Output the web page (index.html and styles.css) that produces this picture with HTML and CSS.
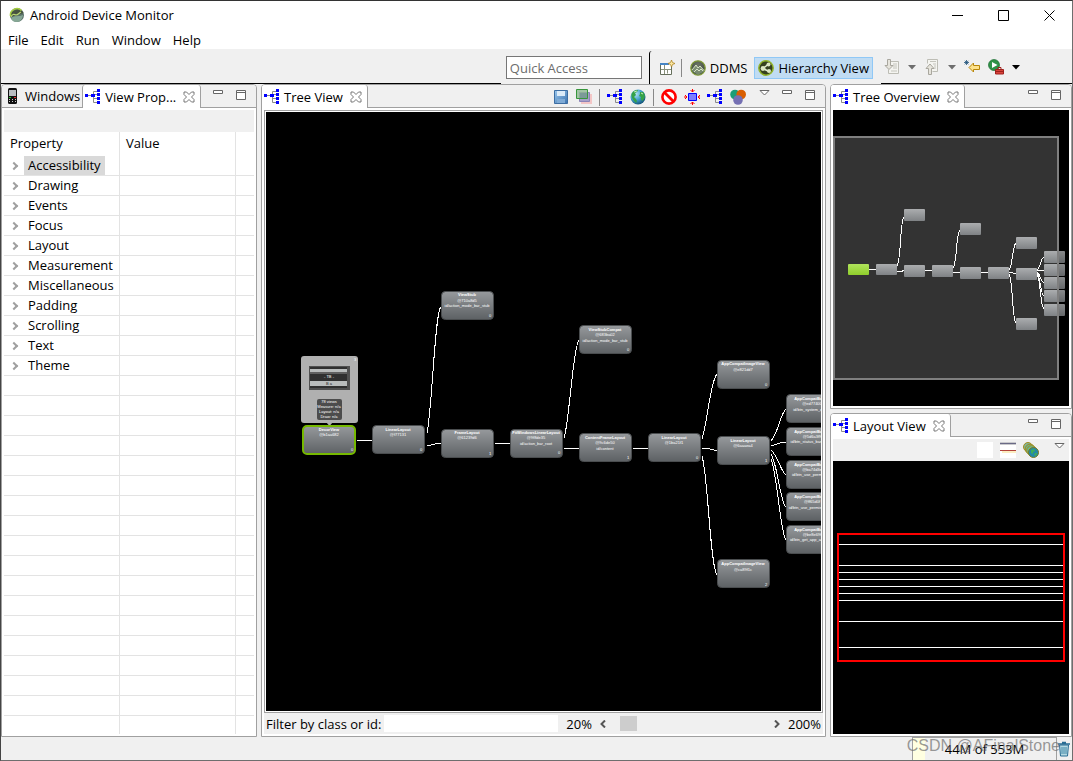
FILE: index.html
```html
<!DOCTYPE html>
<html lang="en">
<head>
<meta charset="utf-8">
<title>Android Device Monitor</title>
<link rel="stylesheet" href="styles.css">
</head>
<body>
<svg class="defs" aria-hidden="true">
  <defs>
    <linearGradient id="node-fill" x1="0" y1="0" x2="0" y2="1"><stop offset="0" stop-color="#96999c"/><stop offset="1" stop-color="#5d6164"/></linearGradient>
    <linearGradient id="mini-fill" x1="0" y1="0" x2="0" y2="1"><stop offset="0" stop-color="#abadaf"/><stop offset="1" stop-color="#7f8285"/></linearGradient>
    <linearGradient id="green-fill" x1="0" y1="0" x2="0" y2="1"><stop offset="0" stop-color="#b0e35c"/><stop offset="1" stop-color="#8fce2b"/></linearGradient>
    <linearGradient id="save-fill" x1="0" y1="0" x2="1" y2="1"><stop offset="0" stop-color="#9cc8ee"/><stop offset="1" stop-color="#3a72ae"/></linearGradient>
    <radialGradient id="globe-fill" cx=".35" cy=".3" r=".8"><stop offset="0" stop-color="#b8e6f6"/><stop offset=".5" stop-color="#3f9fcc"/><stop offset="1" stop-color="#0c4668"/></radialGradient>
    <radialGradient id="badge-fill" cx=".5" cy=".3" r=".7"><stop offset="0" stop-color="#6d7568"/><stop offset="1" stop-color="#39453a"/></radialGradient>
  </defs>
  <symbol id="i-tree" viewBox="0 0 16 16">
    <path d="M3 6.500h3M9 5.500h3M9 9.500h3M8.500 6v-3.500h4M8.500 8v5.500h4" fill="none" stroke="#8c8c8c"/>
    <path d="M0 5h3v3H0zM6 5h3v3H6zM9 5h1v3h-1zM12 0h3v3h-3zM12 4h3v3h-3zM12 8h3v3h-3zM12 12h3v3h-3z" fill="#00f"/>
  </symbol>
  <symbol id="i-close" viewBox="0 0 12 12">
    <path d="M1 1h2.500L6 3.500 8.500 1H11v2.500L8.500 6 11 8.500V11H8.500L6 8.500 3.500 11H1V8.500L3.500 6 1 3.500z" fill="#fff" stroke="#777"/>
  </symbol>
  <symbol id="i-min" viewBox="0 0 11 12"><path d="M.5 1.500h9v3h-9z" fill="#fff" stroke="#666"/></symbol>
  <symbol id="i-max" viewBox="0 0 11 12"><path d="M.5 1.500h9v9h-9zM.5 3.500h9" fill="#fff" stroke="#666"/></symbol>
  <symbol id="i-menu" viewBox="0 0 11 12"><path d="M1 1.500h9L5.500 6z" fill="#fff" stroke="#666"/></symbol>
  <symbol id="i-drop" viewBox="0 0 8 5"><path d="M0 0h8L4 4.500z" fill="currentColor"/></symbol>
  <symbol id="i-globe" viewBox="0 0 16 16">
    <circle cx="8" cy="8" r="7.500" fill="url(#globe-fill)"/>
    <path d="M2 4c2-3 4-3 6-3l-1 2-2 1 1 2-2 2 2 2 1 2-1 2-2-2-2-3c-.5-2-1-3 0-5zM10 3h3c2 2 2 4 1.500 6l-2 3-2-2 .5-2-2-1 1-2z" fill="#35a248"/>
    <path d="M4 3l3-1M11 4l2 1" stroke="#c9edb8"/>
  </symbol>
  <symbol id="i-logo" viewBox="0 0 16 16">
    <circle cx="8" cy="8" r="7" fill="#5a7168"/>
    <path d="M1.500 10A7 7 0 0 1 14.500 6z" fill="#47533f"/>
    <path d="M1.500 9a6.500 6.500 0 0 1 11-5.500" fill="none" stroke="#a6cf3e" stroke-width="1.500"/>
    <path d="M2 10c1-3 3-3 5-2 2 0 3-2 5-3" fill="none" stroke="#b9d873" stroke-width="1.200"/>
    <path d="M2 11c4-3 8-1 12-3-.5 4-3 7-6 7s-5-1-6-4z" fill="#86a795"/>
  </symbol>
  <symbol id="i-ddms" viewBox="0 0 16 16">
    <circle cx="8" cy="8" r="7.200" fill="url(#badge-fill)" stroke="#7f9a35" stroke-width="1.300"/>
    <path d="M2 10l4-5 2 2.500 2-1.500 4 4.500v1L8 15l-5.500-3.500z" fill="#8ba182" fill-opacity=".7"/>
    <path d="M2 10l4-5 2 3 2-2 4 4.500M4 12l3-3 2 2 2-2 2 2" fill="none" stroke="#d7e3c3"/>
  </symbol>
  <symbol id="i-hier" viewBox="0 0 16 16">
    <circle cx="8" cy="8" r="7.200" fill="#35411f" stroke="#93b52c" stroke-width="1.500"/>
    <path d="M5 8.500l5-4M5 8.500l6 3" stroke="#e5edd2" stroke-width="1.500"/>
    <circle cx="5" cy="8.500" r="2.400" fill="#dbe6c0"/><circle cx="10.500" cy="4.500" r="2" fill="#dbe6c0"/><circle cx="11" cy="11" r="2" fill="#dbe6c0"/>
  </symbol>
</svg>

<div class="window">
  <header class="titlebar">
    <svg class="icon" viewBox="0 0 16 16"><use href="#i-logo"/></svg>
    <h1 class="title">Android Device Monitor</h1>
    <div class="controls">
      <button class="control" aria-label="Minimize"><svg class="glyph" viewBox="0 0 11 11"><path d="M0 5.500h11" stroke="#000"/></svg></button>
      <button class="control" aria-label="Maximize"><svg class="glyph" viewBox="0 0 11 11"><path d="M.5.5h10v10H.5z" fill="none" stroke="#000"/></svg></button>
      <button class="control" aria-label="Close"><svg class="glyph" viewBox="0 0 11 11"><path d="M.5.5l10 10M10.500.5l-10 10" stroke="#000"/></svg></button>
    </div>
  </header>
  <nav class="menubar">
    <button class="menu">File</button><button class="menu">Edit</button><button class="menu">Run</button><button class="menu">Window</button><button class="menu">Help</button>
  </nav>

  <div class="toolbar">
    <div class="trim trim-lead"></div>
    <div class="search"><input class="quick" type="text" placeholder="Quick Access" aria-label="Quick Access"></div>
    <div class="perspectives">
      <button class="tool" aria-label="Open Perspective"><svg class="icon" viewBox="0 0 16 16"><path d="M1.500 3.500h11v11h-11z" fill="#fff" stroke="#66705c"/><path d="M1 3h9v2H1z" fill="#4684c4"/><path d="M5.500 5v9M2 9.500h10M8.500 9.500v4" stroke="#8a927c"/><path d="M12.500 0l1 2.500 2.500 1-2.500 1-1 2.500-1-2.500-2.500-1 2.500-1z" fill="#fbe7a0" stroke="#a87b16" stroke-width=".7"/></svg></button>
      <span class="sep"></span>
      <button class="persp"><svg class="icon" viewBox="0 0 16 16"><use href="#i-ddms"/></svg>DDMS</button>
      <button class="persp selected"><svg class="icon" viewBox="0 0 16 16"><use href="#i-hier"/></svg>Hierarchy View</button>
    </div>
    <div class="trim actions">
      <button class="tool" aria-label="Next Annotation"><svg class="icon" viewBox="0 0 16 16"><path d="M6.500 2.500h8v12h-10v-4" fill="#f4f4f0" stroke="#bdbdb5"/><path d="M9 5h4M9 7h4M9 9h4M7 12h6" stroke="#c4c4bc"/><path d="M3.500.5h3v6h2.500L5 10.500 1 6.500h2.500z" fill="#e6e4dc" stroke="#a9a79e"/></svg></button>
      <button class="tool dim" aria-label="Next Annotation menu"><svg class="drop" viewBox="0 0 8 5"><use href="#i-drop"/></svg></button>
      <button class="tool" aria-label="Previous Annotation"><svg class="icon" viewBox="0 0 16 16"><path d="M3.500 4.500v-4h10v12h-5" fill="#f4f4f0" stroke="#bdbdb5"/><path d="M6 2.500h6M9 5h3M10 7h2M10 9h2" stroke="#c4c4bc"/><path d="M4.500 15.500v-6H2L6 5l4 4.500H7.500v6z" fill="#e6e4dc" stroke="#a9a79e"/></svg></button>
      <button class="tool dim" aria-label="Previous Annotation menu"><svg class="drop" viewBox="0 0 8 5"><use href="#i-drop"/></svg></button>
      <button class="tool" aria-label="Last Edit Location"><svg class="icon" viewBox="0 0 16 16"><path d="M5 8.500L9.500 4v2.500h6v4h-6V13z" fill="#fde28c" stroke="#b8860b"/><path d="M2.500 1v5M0 3.500h5M.8 1.800l3.500 3.500M4.300 1.800L.8 5.300" stroke="#1e5078" stroke-width=".8"/></svg></button>
      <button class="tool" aria-label="Run External Tools"><svg class="icon" viewBox="0 0 16 16"><circle cx="6" cy="6" r="5.500" fill="#2f9246" stroke="#1c6e34" stroke-width=".7"/><path d="M4 3l5.500 3L4 9z" fill="#fff"/><path d="M7.500 10.500h8v4.500h-8z" fill="#d8433b" stroke="#9e211c"/><path d="M10 10V8.500h3V10M7.500 12.500h8" fill="none" stroke="#9e211c"/></svg></button>
      <button class="tool" aria-label="External Tools menu"><svg class="drop" viewBox="0 0 8 5"><use href="#i-drop"/></svg></button>
    </div>
  </div>

  <main class="workbench">
    <section class="panel">
      <div class="tabs">
        <button class="tab"><svg class="icon" viewBox="0 0 16 16"><rect x="3" y="0" width="9" height="16" rx="1.500" fill="#111"/><path d="M4 2h7v6H4z" fill="#b8bcc0"/><path d="M4 9.500h2" stroke="#2c2"/><path d="M9 9.500h2" stroke="#e22"/><path d="M4 11.500h7M4 13.500h7" stroke="#ccc" stroke-dasharray="1 2"/></svg>Windows</button>
        <div class="tab active"><svg class="icon" viewBox="0 0 16 16"><use href="#i-tree"/></svg>View Prop...<button class="tool close" aria-label="Close"><svg class="x" viewBox="0 0 12 12"><use href="#i-close"/></svg></button></div>
        <div class="tab-tools">
          <button class="tool mini" aria-label="Minimize"><svg class="box" viewBox="0 0 11 12"><use href="#i-min"/></svg></button>
          <button class="tool mini" aria-label="Maximize"><svg class="box" viewBox="0 0 11 12"><use href="#i-max"/></svg></button>
        </div>
      </div>
      <div class="content">
        <div class="viewbar"></div>
        <div class="grid">
          <table class="props">
            <thead><tr><th>Property</th><th>Value</th><th></th></tr></thead>
            <tbody>
              <tr><td><span class="twist"></span><span class="name picked">Accessibility</span></td><td></td><td></td></tr>
              <tr><td><span class="twist"></span><span class="name">Drawing</span></td><td></td><td></td></tr>
              <tr><td><span class="twist"></span><span class="name">Events</span></td><td></td><td></td></tr>
              <tr><td><span class="twist"></span><span class="name">Focus</span></td><td></td><td></td></tr>
              <tr><td><span class="twist"></span><span class="name">Layout</span></td><td></td><td></td></tr>
              <tr><td><span class="twist"></span><span class="name">Measurement</span></td><td></td><td></td></tr>
              <tr><td><span class="twist"></span><span class="name">Miscellaneous</span></td><td></td><td></td></tr>
              <tr><td><span class="twist"></span><span class="name">Padding</span></td><td></td><td></td></tr>
              <tr><td><span class="twist"></span><span class="name">Scrolling</span></td><td></td><td></td></tr>
              <tr><td><span class="twist"></span><span class="name">Text</span></td><td></td><td></td></tr>
              <tr><td><span class="twist"></span><span class="name">Theme</span></td><td></td><td></td></tr>
            </tbody>
          </table>
        </div>
      </div>
    </section>

    <section class="panel">
      <div class="tabs">
        <div class="tab active"><svg class="icon" viewBox="0 0 16 16"><use href="#i-tree"/></svg>Tree View<button class="tool close" aria-label="Close"><svg class="x" viewBox="0 0 12 12"><use href="#i-close"/></svg></button></div>
        <div class="tab-tools">
          <div class="view-actions">
            <button class="tool" aria-label="Save as PNG"><svg class="icon" viewBox="0 0 16 16"><path d="M1.500 1.500h13v13h-13z" fill="url(#save-fill)" stroke="#3d6ea3"/><path d="M4 2h8v5H4z" fill="#dcebf8"/><path d="M4 10h8v4H4z" fill="#7fabd6"/></svg></button>
            <button class="tool" aria-label="Capture Layers"><svg class="icon" viewBox="0 0 16 16"><path d="M5 5h11v10H5z" fill="#f3c6c6"/><path d="M3.500 3.500h10v9h-10z" fill="#a7a0c8" stroke="#8c84b8"/><path d="M.5.5h11v9H.5z" fill="#8fb992" fill-opacity=".8" stroke="#37963b"/><path d="M4 4h7v5H4z" fill="#7b9a98"/></svg></button>
            <span class="sep"></span>
            <button class="tool" aria-label="Load View Hierarchy"><svg class="icon" viewBox="0 0 16 16"><use href="#i-tree"/></svg></button>
            <button class="tool" aria-label="Display View"><svg class="icon" viewBox="0 0 16 16"><use href="#i-globe"/></svg></button>
            <span class="sep"></span>
            <button class="tool" aria-label="Invalidate Layout"><svg class="icon" viewBox="0 0 16 16"><circle cx="8" cy="8" r="6.600" fill="#fff" stroke="#f00" stroke-width="2.600"/><path d="M3.500 3.500l9 9" stroke="#f00" stroke-width="2.800"/></svg></button>
            <button class="tool" aria-label="Request Layout"><svg class="icon" viewBox="0 0 16 16"><path d="M4.500 4.500h8v7h-8z" fill="#7d7dff" stroke="#00f"/><path d="M8.500 0v3M6.500 1l2 2 2-2M8.500 16v-3M6.500 15l2-2 2 2M0 8h3M1 6l2 2-2 2M16 8h-2M16 6l-2 2 2 2" fill="none" stroke="#f00"/></svg></button>
            <button class="tool" aria-label="Dump Display List"><svg class="icon" viewBox="0 0 16 16"><use href="#i-tree"/></svg></button>
            <button class="tool" aria-label="Profile Node"><svg class="icon" viewBox="0 0 16 16"><circle cx="5" cy="5.500" r="4.800" fill="#1b9e77"/><circle cx="11.200" cy="5.500" r="4.800" fill="#d95f02"/><circle cx="8" cy="11" r="4.800" fill="#7570b3"/></svg></button>
          </div>
          <button class="tool mini" aria-label="View Menu"><svg class="box" viewBox="0 0 11 12"><use href="#i-menu"/></svg></button>
          <button class="tool mini" aria-label="Minimize"><svg class="box" viewBox="0 0 11 12"><use href="#i-min"/></svg></button>
          <button class="tool mini" aria-label="Maximize"><svg class="box" viewBox="0 0 11 12"><use href="#i-max"/></svg></button>
        </div>
      </div>
      <div class="content">
        <div class="frame">
          <svg class="canvas" role="img" aria-label="View hierarchy">
            <g transform="translate(-266 -112)">
              <g class="edges">
                <path d="M357 440.500h15M427 433C432 410 435 310 441 307M427 446l8-2 6-1M495 443.500h15M564 438C569 425 573 346 579 340M564 449l8-1h7M633 448.500h15M702 439C708 420 710 382 717 374M702 448h5l10 3M702 456C708 475 710 565 717 575M771 441C778 434 780 414 786 409M771 446l9-3 6-1M771 450C778 456 780 470 786 475M771 454C778 466 780 502 786 507M771 459C778 478 780 532 786 540"/>
              </g>
              <rect x="301" y="356" width="57" height="67" rx="3" fill="#b0b0b0"/>
              <path d="M326 422h7l-3.500 4z" fill="#b0b0b0"/>
              <path d="M309 366h41v24h-41z" fill="#505050"/>
              <path d="M310 367h37v21h-37z" fill="#303030"/>
              <path d="M310 369h37v3h-37zM310 381h37v5h-37z" fill="#b9bcbc"/>
              <path d="M310 372h37v2h-37z" fill="#606060"/>
              <rect x="317" y="399" width="25" height="21" rx="2" fill="#4c4c4c"/>
              <g class="label">
                <text x="355" y="361">3</text><text x="329" y="378">- TB -</text><text class="dark" x="329" y="385">B a</text>
                <text x="329" y="403">78 views</text><text x="329" y="408">Measure: n/a</text><text x="329" y="413">Layout: n/a</text><text x="329" y="418">Draw: n/a</text>
              </g>
              <g class="nodes">
                <rect class="root" x="303" y="426" width="52" height="28" rx="4"/>
                <rect x="372.500" y="425.500" width="52" height="28" rx="4"/>
                <rect x="441.500" y="291.500" width="52" height="28" rx="4"/>
                <rect x="441.500" y="429.500" width="52" height="28" rx="4"/>
                <rect x="510.500" y="429.500" width="52" height="28" rx="4"/>
                <rect x="579.500" y="325.500" width="52" height="28" rx="4"/>
                <rect x="579.500" y="433.500" width="52" height="28" rx="4"/>
                <rect x="648.500" y="433.500" width="52" height="28" rx="4"/>
                <rect x="717.500" y="360.500" width="52" height="28" rx="4"/>
                <rect x="717.500" y="436.500" width="52" height="28" rx="4"/>
                <rect x="717.500" y="559.500" width="52" height="28" rx="4"/>
                <rect x="786.500" y="394.500" width="52" height="28" rx="4"/>
                <rect x="786.500" y="427.500" width="52" height="28" rx="4"/>
                <rect x="786.500" y="460.500" width="52" height="28" rx="4"/>
                <rect x="786.500" y="492.500" width="52" height="28" rx="4"/>
                <rect x="786.500" y="525.500" width="52" height="28" rx="4"/>
              </g>
              <g class="label strong">
                <text x="329" y="431">DecorView</text><text x="398" y="431">LinearLayout</text><text x="467" y="296">ViewStub</text><text x="467" y="434">FrameLayout</text>
                <text x="536" y="434">FitWindowsLinearLayout</text><text x="605" y="331">ViewStubCompat</text><text x="605" y="439">ContentFrameLayout</text><text x="674" y="439">LinearLayout</text>
                <text x="743" y="365">AppCompatImageView</text><text x="743" y="442">LinearLayout</text><text x="743" y="565">AppCompatImageView</text>
                <text x="812" y="400">AppCompatButton</text><text x="812" y="433">AppCompatButton</text><text x="812" y="466">AppCompatButton</text><text x="812" y="498">AppCompatButton</text><text x="812" y="531">AppCompatButton</text>
              </g>
              <g class="label">
                <text x="329" y="436">@b1aa682</text><text x="398" y="436">@f77131</text>
                <text x="467" y="302">@710a8d5</text><text x="467" y="307">id/action_mode_bar_stub</text>
                <text x="467" y="439">@61239d6</text>
                <text x="536" y="439">@9f8de35</text><text x="536" y="445">id/action_bar_root</text>
                <text x="605" y="336">@683ba02</text><text x="605" y="342">id/action_mode_bar_stub</text>
                <text x="605" y="444">@9c6de50</text><text x="605" y="450">id/content</text>
                <text x="674" y="444">@1ba21f1</text><text x="743" y="371">@e821dd7</text><text x="743" y="447">@6aaaea4</text><text x="743" y="571">@ca89f1c</text>
                <text x="812" y="405">@ed77400</text><text x="812" y="411">id/btn_system_dialog</text>
                <text x="812" y="438">@5d6a3f9</text><text x="812" y="443">id/btn_status_bar_demo</text>
                <text x="812" y="471">@ba74d3e</text><text x="812" y="476">id/btn_use_permission</text>
                <text x="812" y="503">@ff65d0f</text><text x="812" y="509">id/btn_use_permission_ac</text>
                <text x="812" y="536">@be8e69f</text><text x="812" y="541">id/btn_get_app_and_info</text>
                <text x="352" y="451">0</text><text x="421" y="451">0</text><text x="490" y="317">0</text><text x="490" y="455">1</text><text x="559" y="454">0</text><text x="628" y="351">0</text><text x="628" y="459">1</text><text x="697" y="459">0</text><text x="766" y="386">0</text><text x="766" y="462">1</text><text x="766" y="586">2</text>
              </g>
            </g>
          </svg>
        </div>
        <div class="filterbar">
          <label for="filter">Filter by class or id:</label>
          <input class="filter" id="filter" type="text">
          <span class="low">20%</span>
          <svg class="arrow" viewBox="0 0 6 8"><path d="M5 .5L1.500 4 5 7.500" fill="none" stroke="#555" stroke-width="2"/></svg>
          <input class="zoom" type="range" min="20" max="200" value="28" aria-label="Zoom">
          <svg class="arrow" viewBox="0 0 6 8"><path d="M1 .5L4.500 4 1 7.500" fill="none" stroke="#555" stroke-width="2"/></svg>
          <span class="high">200%</span>
        </div>
      </div>
    </section>

    <div class="side">
      <section class="panel">
        <div class="tabs">
          <div class="tab active"><svg class="icon" viewBox="0 0 16 16"><use href="#i-tree"/></svg>Tree Overview<button class="tool close" aria-label="Close"><svg class="x" viewBox="0 0 12 12"><use href="#i-close"/></svg></button></div>
          <div class="tab-tools">
            <button class="tool mini" aria-label="Minimize"><svg class="box" viewBox="0 0 11 12"><use href="#i-min"/></svg></button>
            <button class="tool mini" aria-label="Maximize"><svg class="box" viewBox="0 0 11 12"><use href="#i-max"/></svg></button>
          </div>
        </div>
        <div class="content">
          <svg class="canvas" role="img" aria-label="Tree overview">
            <g transform="translate(-833 -110)">
              <path d="M833 136h226v244H833z" fill="#333"/>
              <g class="edges">
                <path d="M869 269.500h7M897 266C901 262 900 220 904 217M897 271.500h4l3-1M925 270.500h7M953 268C957 264 956 233 960 230M953 273l4-1h3M981 272.500h7M1009 270C1013 266 1012 246 1016 243M1009 272l4 1h3M1009 274C1013 280 1012 320 1016 323M1037 270C1041 267 1040 259 1044 257M1037 271l7-1M1037 272C1041 275 1040 281 1044 283M1037 273C1041 278 1040 294 1044 296M1037 274C1041 280 1040 307 1044 309"/>
              </g>
              <g class="minis">
                <rect class="first" x="848" y="264" width="21" height="11" rx="1"/>
                <rect x="876" y="264" width="21" height="11" rx="1"/>
                <rect x="904" y="209" width="21" height="12" rx="1"/>
                <rect x="904" y="265" width="21" height="12" rx="1"/>
                <rect x="932" y="265" width="21" height="12" rx="1"/>
                <rect x="960" y="223" width="21" height="12" rx="1"/>
                <rect x="960" y="267" width="21" height="12" rx="1"/>
                <rect x="988" y="267" width="21" height="12" rx="1"/>
                <rect x="1016" y="237" width="21" height="12" rx="1"/>
                <rect x="1016" y="268" width="21" height="12" rx="1"/>
                <rect x="1016" y="318" width="21" height="12" rx="1"/>
                <rect x="1044" y="251" width="21" height="12" rx="1"/>
                <rect x="1044" y="264" width="21" height="12" rx="1"/>
                <rect x="1044" y="277" width="21" height="12" rx="1"/>
                <rect x="1044" y="290" width="21" height="12" rx="1"/>
                <rect x="1044" y="304" width="21" height="12" rx="1"/>
              </g>
              <path d="M1059 250h7v67h-7z" fill="#000" fill-opacity=".2"/>
              <path d="M834 137h224v242H834z" fill="none" stroke="#7f7f7f" stroke-width="2"/>
            </g>
          </svg>
        </div>
      </section>

      <section class="panel">
        <div class="tabs">
          <div class="tab active"><svg class="icon" viewBox="0 0 16 16"><use href="#i-tree"/></svg>Layout View<button class="tool close" aria-label="Close"><svg class="x" viewBox="0 0 12 12"><use href="#i-close"/></svg></button></div>
          <div class="tab-tools">
            <button class="tool mini" aria-label="Minimize"><svg class="box" viewBox="0 0 11 12"><use href="#i-min"/></svg></button>
            <button class="tool mini" aria-label="Maximize"><svg class="box" viewBox="0 0 11 12"><use href="#i-max"/></svg></button>
          </div>
        </div>
        <div class="content">
          <div class="viewbar">
            <button class="tool" aria-label="White Background"><svg class="icon" viewBox="0 0 16 16"><path d="M0 0h16v16H0z" fill="#fff"/></svg></button>
            <button class="tool" aria-label="Show Extras"><svg class="icon" viewBox="0 0 16 16"><path d="M0 0h16v16H0z" fill="#fff"/><path d="M0 0h16v3H0z" fill="#c9c9cc"/><path d="M0 1.500h16" stroke="#6a6a86"/><path d="M0 8.500h16" stroke="#b3423a"/><path d="M2 10h14" stroke="#fbedc0" stroke-width="2"/></svg></button>
            <button class="tool" aria-label="Load All Views"><svg class="icon" viewBox="0 0 16 16"><circle cx="5" cy="5" r="4.500" fill="#7fb59a" stroke="#a48c1c"/><circle cx="7" cy="7" r="4.800" fill="#6cb58c" stroke="#a48c1c"/><circle cx="8.500" cy="8.500" r="4.800" fill="#6cb58c" stroke="#a48c1c"/><circle cx="10.500" cy="10.500" r="5" fill="#2389a8" stroke="#7b7a1c"/><path d="M8 8l3-1 1 2-2 1v2l-2-1zM12 11l2 0-1 3-2-1z" fill="#3fae5a"/></svg></button>
            <button class="tool mini" aria-label="View Menu"><svg class="box" viewBox="0 0 11 12"><use href="#i-menu"/></svg></button>
          </div>
          <svg class="canvas" role="img" aria-label="Layout wireframe">
            <g transform="translate(-833 -461)">
              <path d="M839 544.500h226M839 565.500h226M839 572.500h226M839 579.500h226M839 586.500h226M839 593.500h226M839 600.500h226M839 621.500h226M839 647.500h226" stroke="#fff"/>
              <path d="M838 534h226v127H838z" fill="none" stroke="#f00" stroke-width="2"/>
            </g>
          </svg>
        </div>
      </section>
    </div>
  </main>

  <footer class="status">
    <div class="heap"><span class="heap-text">44M of 553M</span></div>
    <button class="tool trash" aria-label="Run Garbage Collector"><svg class="icon" viewBox="0 0 16 16"><path d="M3.500 4h9l-1 11h-7z" fill="#b5d9e2" stroke="#286c93"/><path d="M2 3h12M6 1.500h4" stroke="#286c93" stroke-width="1.500"/><path d="M6 6v7M8 6v7M10 6v7" stroke="#3f86a6"/></svg></button>
    <span class="watermark">CSDN @AFinalStone</span>
  </footer>
</div>
</body>
</html>
```
FILE: styles.css
```css
* { box-sizing: border-box; }
body { margin: 0; font: 13px/18px "Open Sans", "Noto Sans", sans-serif; color: #000; }
button, input { font: inherit; color: inherit; margin: 0; padding: 0; border: 0; background: none; border-radius: 0; }
svg { display: block; flex: none; }
.defs { position: absolute; width: 0; height: 0; }
.icon { width: 16px; height: 16px; }

.window { display: flex; flex-direction: column; height: 100vh; border: 1px solid #6e6e6e; border-top-color: #333; border-left-color: #444; background: #f0f0f0; overflow: hidden; }
.titlebar { display: flex; align-items: center; height: 30px; padding: 0 0 2px 8px; gap: 5px; background: #fff; }
.title { margin: 0; font-size: inherit; font-weight: normal; }
.controls { display: flex; margin-left: auto; }
.control { display: flex; width: 46px; height: 28px; align-items: center; justify-content: center; }
.glyph { width: 11px; height: 11px; }
.menubar { display: flex; height: 18px; padding-left: 7px; gap: 12px; background: #fff; }

.toolbar { display: flex; height: 35px; padding-top: 2px; }
.trim { border-bottom: 1px solid #000; }
.trim-lead { flex: 1; }
.search { display: flex; align-items: center; padding: 0 7px 0 5px; }
.quick { width: 136px; height: 23px; padding: 0 3px; border: 1px solid #767676; background: #fff; }
.quick::placeholder { color: #6d6d6d; opacity: 1; }
.perspectives { display: flex; align-items: center; padding: 0 8px 0 9px; border-left: 1px solid #000; border-top-left-radius: 3px; }
.tool { display: flex; flex: none; }
.sep { width: 1px; height: 18px; background: #888; }
.perspectives .sep { margin: 0 3px 0 6px; }
.persp { display: flex; align-items: center; gap: 4px; height: 22px; padding: 0 4px; border: 1px solid transparent; white-space: nowrap; }
.persp.selected { margin-left: 2px; padding: 0 3px; background: #c0dcf3; border-color: #90c8f6; }
.actions { display: flex; align-items: center; gap: 8px; width: 191px; padding-left: 3px; }
.drop { width: 8px; height: 5px; }
.dim { color: #6d6d6d; }

.workbench { display: grid; grid-template-columns: 256px minmax(0, 1fr) 242px; gap: 4px; flex: 1; min-height: 0; }
.side { display: grid; grid-template-rows: 325fr 324fr; gap: 4px; min-height: 0; }
.panel { display: flex; flex-direction: column; min-height: 0; border: 1px solid #a0a0a0; border-radius: 4px 4px 0 0; background: #fff; }
.tabs { display: flex; height: 23px; flex: none; background: #f0f0f0; border-radius: 3px 3px 0 0; }
.tab { display: flex; align-items: center; gap: 4px; padding: 0 2px 0 3px; border-bottom: 1px solid #a0a0a0; white-space: nowrap; }
.tab.active { padding: 0 5px 0 2px; background: #fff; border-bottom: 0; border-right: 1px solid #a0a0a0; border-radius: 3px 3px 0 0; }
.tab + .tab.active { border-left: 1px solid #a0a0a0; }
.close { margin-left: 3px; }
.x { width: 12px; height: 12px; }
.tab-tools { display: flex; flex: 1; justify-content: flex-end; gap: 12px; padding: 4px 9px 0 0; border-bottom: 1px solid #a0a0a0; }
.box { width: 11px; height: 12px; }
.mini { align-self: flex-start; }
.view-actions { display: flex; gap: 7px; margin-right: 1px; }
.view-actions .sep { height: 17px; }
.content { display: flex; flex-direction: column; flex: 1; min-height: 0; padding: 2px; }
.viewbar { display: flex; flex: none; align-items: center; justify-content: flex-end; gap: 7px; height: 22px; padding-right: 4px; background: #f0f0f0; }
.viewbar .mini { margin: 3px 0 0 8px; }

.grid { flex: 1; min-height: 0; background:
  linear-gradient(#e3e3e3, #e3e3e3) 115px 0 / 1px 100% no-repeat,
  linear-gradient(#e3e3e3, #e3e3e3) 231px 0 / 1px 100% no-repeat,
  repeating-linear-gradient(#fff 0 19px, #e3e3e3 19px 20px) 0 24px no-repeat; }
.props { width: 100%; table-layout: fixed; border-collapse: separate; border-spacing: 0; }
.props th { height: 24px; padding: 0 6px 2px; text-align: left; font-weight: normal; background: #fff; }
.props th:nth-child(1) { width: 116px; border-right: 1px solid #e3e3e3; }
.props th:nth-child(2) { width: 116px; border-right: 1px solid #e3e3e3; }
.props td { height: 20px; padding: 0 0 1px 7px; white-space: nowrap; line-height: 19px; }
.twist { display: inline-block; width: 6px; height: 6px; border: solid #a0a0a0; border-width: 2px 2px 0 0; rotate: 45deg; margin-right: 7px; vertical-align: 1px; }
.name { display: inline-block; padding: 0 4px; }
.picked { background: #d9d9d9; }

.frame { display: flex; flex: 1; min-height: 0; padding: 1px; border: 1px solid #a0a0a0; }
.canvas { flex: 1; width: 100%; min-height: 0; background: #000; overflow: hidden; }
.edges { fill: none; stroke: #fff; stroke-width: 1; shape-rendering: crispEdges; }
.nodes { fill: url(#node-fill); stroke: #4a4d4f; stroke-width: 1; }
.root { stroke: #76b900; stroke-width: 2; }
.minis { fill: url(#mini-fill); }
.first { fill: url(#green-fill); }
.label { fill: #fff; font: 4px "Liberation Sans", sans-serif; text-anchor: middle; }
.strong { font-weight: bold; }
.dark { fill: #222; }
.filterbar { display: flex; align-items: center; flex: none; height: 21px; padding: 0 2px; background: #f0f0f0; white-space: nowrap; }
.filter { flex: 1; min-width: 0; height: 17px; margin: 0 8px 0 3px; background: #fff; }
.arrow { width: 6px; height: 8px; margin: 0 8px; }
.zoom { width: 152px; height: 15px; appearance: none; }
.zoom::-webkit-slider-thumb { appearance: none; width: 17px; height: 15px; background: #cdcdcd; }

.status { position: relative; display: flex; height: 23px; flex: none; justify-content: flex-end; padding-right: 2px; }
.heap { display: flex; align-items: center; justify-content: center; width: 145px; border: solid #a0a0a0; border-width: 1px 1px 0; background: linear-gradient(90deg, #ffffe1 12px, #f0f0f0 12px); }
.trash { align-items: center; width: 13px; justify-content: center; }
.watermark { position: absolute; right: 12px; top: 0; font: 16px/18px "Liberation Sans", sans-serif; color: rgba(110, 110, 110, .7); }
```
